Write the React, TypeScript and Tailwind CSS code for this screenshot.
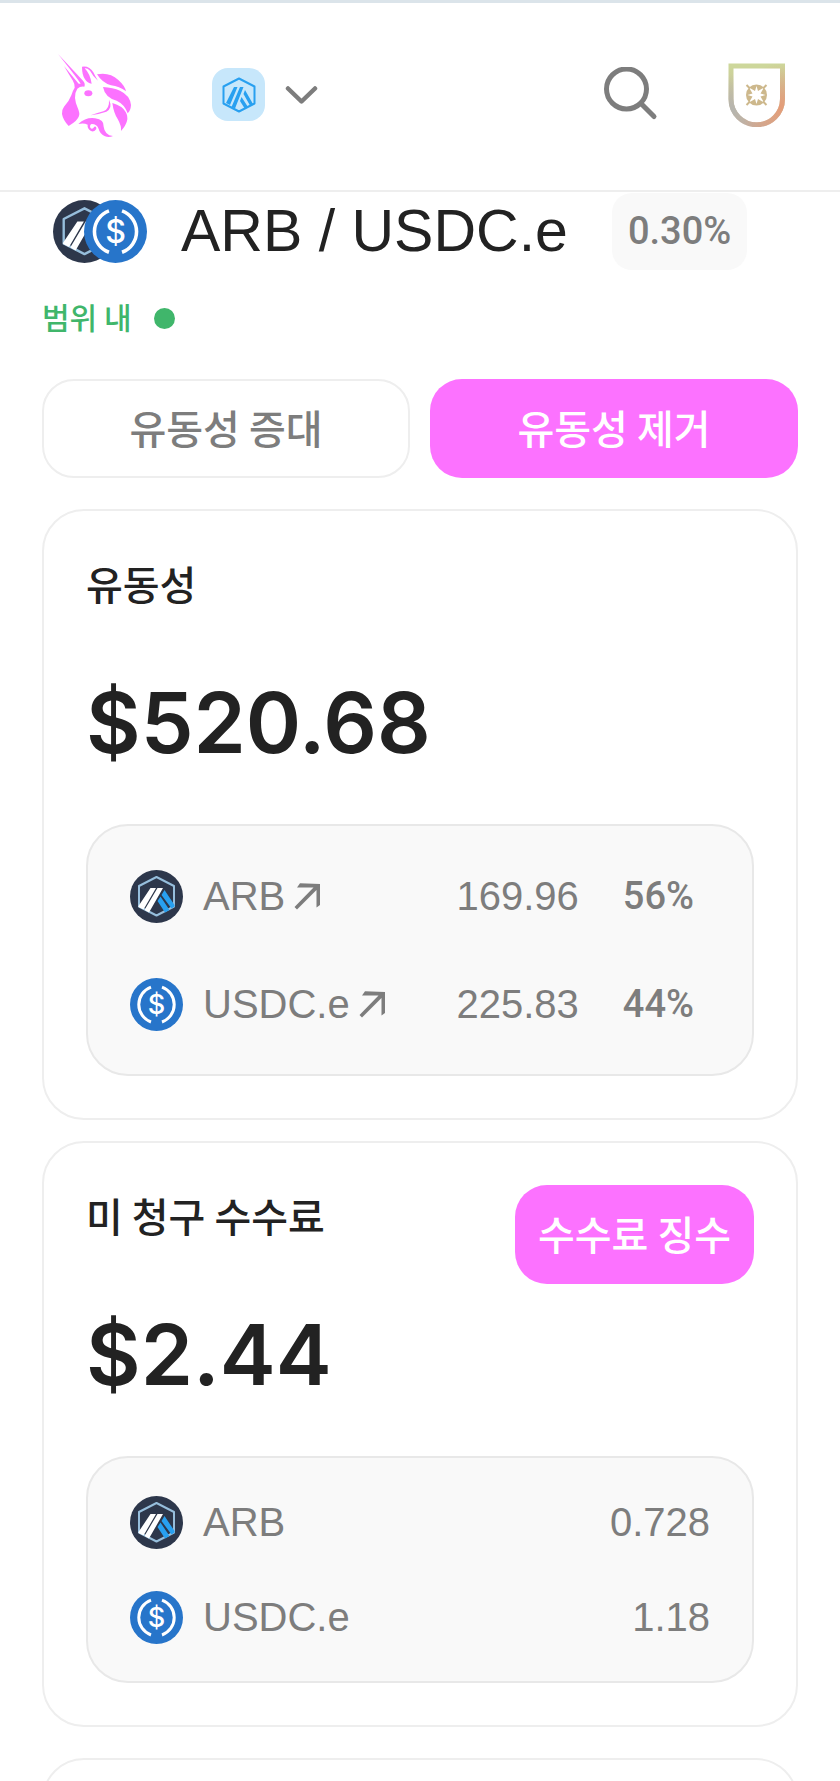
import React from 'react';

const HANGUL = "font-['Noto_Sans_CJK_KR',sans-serif]";

function UnicornLogo() {
  return (
    <svg viewBox="0 0 330 330" className="size-[110px]" fill="#fc72ff">
      <path d="M54 42 L129 122 Q137 131 133 140 Q121 138 112 146 Q104 158 105 174 Q106 187 113 203 Q120 219 117 228 Q113 242 86 258 Q69 240 66 222 Q65 209 72 200 Q88 183 94 166 Q98 152 104 143 Q105 133 98 121 Q86 102 72 78 L116 131 L122 131 Q110 112 54 42 Z" />
      <path d="M126 80 Q147 76 160 97 Q166 110 174 122 Q160 111 150 92 Q142 84 134 85 Q150 101 155 131 Q142 130 135 118 Q126 105 126 80 Z" />
      <ellipse cx="145" cy="160" rx="12" ry="9" />
      <path d="M171 103 Q208 95 235 120 Q255 138 258 154 Q238 139 213 136 Q187 129 171 103 Z" />
      <path d="M189 141 Q219 143 240 152 Q270 166 273 195 Q272 212 263 220 Q255 194 230 182 Q195 173 189 141 Z" />
      <path d="M217 189 Q248 198 257 216 Q272 241 243 273 Q245 258 233 237 Q221 219 217 189 Z" />
      <path d="M207 179 Q219 204 199 215 Q179 222 152 226 Q173 218 190 214 Q209 206 207 179 Z" />
      <path d="M115 252 Q138 231 165 235 Q193 239 191 260 Q194 285 219 288 Q207 294 195 289 Q180 283 176 267 Q171 252 155 252 Q148 255 151 263 Q157 270 163 260 Q170 258 169 267 Q163 277 153 273 Q141 266 143 254 Q132 248 115 252 Z" />
    </svg>
  );
}

function ChainIcon() {
  return (
    <span className="flex size-[53px] items-center justify-center rounded-2xl bg-[#c7e7fb]">
      <svg viewBox="0 0 34 36" className="h-9 w-[34px]">
        <path
          d="M17 1.5 L32.5 9.5 V26.5 L17 34.5 L1.5 26.5 V9.5 Z"
          fill="none"
          stroke="#28a0f0"
          strokeWidth="2"
          strokeLinejoin="round"
        />
        <path
          d="M12 10 H15.5 L8 28 L4 26 Z M18 10 H21.5 L13 31.5 L9.5 30 Z M21.5 17 L23 13 L31 27 L28 28.5 Z M18 24 L19.5 20 L26 30 L23 32 Z"
          fill="#28a0f0"
        />
      </svg>
    </span>
  );
}

function ArbIcon({ className }: { className: string }) {
  return (
    <svg viewBox="0 0 53 53" className={className}>
      <circle cx="26.5" cy="26.5" r="26.5" fill="#2d374b" />
      <path
        d="M26.5 7 L44 16 V36.5 L26.5 45.5 L9 36.5 V16 Z"
        fill="none"
        stroke="#96bedc"
        strokeWidth="2"
        strokeLinejoin="round"
      />
      <path
        d="M34.5 20 L44.5 35 V36.5 L41.5 38.5 L31.5 25 Z M30.5 26.5 L39.5 40 L35 42.5 L27.5 31 Z"
        fill="#28a0f0"
      />
      <path
        d="M20.5 18 H26 L13.5 39.5 L8.5 37 V36 Z M27.5 18 H33 L19 42.5 L14.5 40 Z"
        fill="#fff"
      />
    </svg>
  );
}

function UsdcIcon({ className }: { className: string }) {
  return (
    <svg viewBox="0 0 53 53" className={className}>
      <circle cx="26.5" cy="26.5" r="26.5" fill="#2775ca" />
      <path
        d="M21 9.2 A18.5 18.5 0 0 0 21 44 M32 9.2 A18.5 18.5 0 0 1 32 44"
        fill="none"
        stroke="#fff"
        strokeWidth="3"
      />
      <text
        x="26.5"
        y="36"
        textAnchor="middle"
        fontSize="27"
        fontWeight="500"
        fontFamily="Inter, sans-serif"
        fill="#fff"
      >
        $
      </text>
    </svg>
  );
}

function ArrowIcon() {
  return (
    <svg viewBox="0 0 28 28" className="size-7" fill="#7d7d7d">
      <path d="M1.5 25 L20.5 5.5 H4 L7 1.3 L27 2 V23 L23.5 25.5 V8 L4 27.5 Z" />
    </svg>
  );
}

function ShieldIcon() {
  return (
    <svg viewBox="0 0 58 64" className="h-16 w-[58px]">
      <defs>
        <linearGradient id="shield" x1="0" y1="0" x2="0" y2="1">
          <stop offset="0" stopColor="#cdd79b" />
          <stop offset="1" stopColor="#c8ac9a" />
        </linearGradient>
        <radialGradient id="shieldGlow" cx="0.95" cy="0.7" r="0.75">
          <stop offset="0" stopColor="#e59c78" />
          <stop offset="1" stopColor="#e59c78" stopOpacity="0" />
        </radialGradient>
        <radialGradient id="shieldShade" cx="0" cy="0.75" r="0.6">
          <stop offset="0" stopColor="#b5b5b0" />
          <stop offset="1" stopColor="#b5b5b0" stopOpacity="0" />
        </radialGradient>
      </defs>
      {['url(#shield)', 'url(#shieldShade)', 'url(#shieldGlow)'].map((paint) => (
        <path
          key={paint}
          d="M3 3 H54.5 V36 A25.5 25.5 0 0 1 3 36 Z"
          fill="none"
          stroke={paint}
          strokeWidth="5"
        />
      ))}
      <circle cx="28.5" cy="32" r="10.5" fill="#cdb88c" />
      <path
        d="M28.5 23 L30 28 L36 24.5 L32.5 30.5 L37.5 32 L32.5 33.5 L36 39.5 L30 36 L28.5 41 L27 36 L21 39.5 L24.5 33.5 L19.5 32 L24.5 30.5 L21 24.5 L27 28 Z"
        fill="#fff"
      />
      <path
        d="M18.5 22 L22 25.5 M38.5 22 L35 25.5 M18.5 42 L22 38.5 M38.5 42 L35 38.5"
        stroke="#cdb88c"
        strokeWidth="2"
      />
    </svg>
  );
}

function Header() {
  return (
    <header className="flex h-48 items-center justify-between border-t-3 border-b-2 border-t-[#dbe4ea] border-b-[#eee] pr-[54px] pb-1 pl-10">
      <div className="flex items-center gap-[62px]">
        <a href="#" aria-label="Uniswap">
          <UnicornLogo />
        </a>
        <button type="button" aria-label="Arbitrum" className="flex items-center gap-5">
          <ChainIcon />
          <svg viewBox="0 0 34 20" className="h-5 w-[34px]">
            <path
              d="M3 3.5 L16.5 16.5 L30 3.5"
              fill="none"
              stroke="#7d7d7d"
              strokeWidth="4.5"
              strokeLinecap="round"
              strokeLinejoin="round"
            />
          </svg>
        </button>
      </div>
      <div className="flex items-center gap-[69px]">
        <button type="button" aria-label="Search">
          <svg viewBox="0 0 56 56" className="size-14" fill="none" stroke="#7d7d7d" strokeLinecap="round">
            <circle cx="23.5" cy="22" r="20" strokeWidth="5" />
            <path d="M38.5 37 L51 49.5" strokeWidth="5" />
          </svg>
        </button>
        <button type="button" aria-label="Account">
          <ShieldIcon />
        </button>
      </div>
    </header>
  );
}

function Amount({ label, value }: { label: string; value: string }) {
  return (
    <div>
      <h2 className={`${HANGUL} text-[40px] leading-[60px] font-medium`}>{label}</h2>
      <p className="mt-[52px] font-['Inter',sans-serif] text-[84px] leading-[115px] font-semibold">
        {value}
      </p>
    </div>
  );
}

export default function App() {
  return (
    <div className="flex min-h-screen flex-col bg-white font-['Liberation_Sans',sans-serif] text-[#222]">
      <Header />
      <main className="flex flex-1 flex-col px-[42px] pt-px">
        <div className="flex h-[77px] items-center">
          <div className="ml-[11px] flex">
            <ArbIcon className="size-[63px]" />
            <UsdcIcon className="-ml-8 size-[63px]" />
          </div>
          <h1 className="ml-[34px] text-[59px] leading-[77px] whitespace-nowrap">ARB / USDC.e</h1>
          <span className="ml-11 rounded-[20px] bg-[#f9f9f9] px-4 font-['Roboto',sans-serif] text-[38px] leading-[77px] font-medium text-[#7d7d7d]">
            0.30%
          </span>
        </div>

        <div className="mt-[26px] flex h-11 items-center gap-[22px] text-[#40b66b]">
          <span className={`${HANGUL} pb-1 text-[30px] leading-[40px] font-medium`}>범위 내</span>
          <span className="size-[21px] rounded-full bg-[#40b66b]" />
        </div>

        <div className={`${HANGUL} mt-[39px] grid grid-cols-2 gap-5 text-[40px] font-medium`}>
          <button
            type="button"
            className="h-[99px] rounded-[32px] border-2 border-[#eee] pb-1 text-[#7d7d7d]"
          >
            유동성 증대
          </button>
          <button type="button" className="h-[99px] rounded-[32px] bg-[#fc72ff] pb-1 text-white">
            유동성 제거
          </button>
        </div>

        <section className="mt-[31px] rounded-[42px] border-2 border-[#eee] p-[42px]">
          <Amount label="유동성" value="$520.68" />
          <div className="mt-11 space-y-[52px] rounded-[42px] border-2 border-[#e8e8e8] bg-[#f9f9f9] p-[42px] text-[40px] leading-[56px] text-[#7d7d7d]">
            <div className="flex items-center">
              <ArbIcon className="size-[53px]" />
              <a href="#" className="ml-5 flex items-center gap-2">
                ARB <ArrowIcon />
              </a>
              <span className="ml-auto">169.96</span>
              <span className="ml-7 px-4 font-['Roboto',sans-serif] text-[38px] font-medium">56%</span>
            </div>
            <div className="flex items-center">
              <UsdcIcon className="size-[53px]" />
              <a href="#" className="ml-5 flex items-center gap-2">
                USDC.e <ArrowIcon />
              </a>
              <span className="ml-auto">225.83</span>
              <span className="ml-7 px-4 font-['Roboto',sans-serif] text-[38px] font-medium">44%</span>
            </div>
          </div>
        </section>

        <section className="mt-[21px] rounded-[42px] border-2 border-[#eee] p-[42px]">
          <div className="flex items-start justify-between">
            <Amount label="미 청구 수수료" value="$2.44" />
            <button
              type="button"
              className={`${HANGUL} h-[99px] rounded-[32px] bg-[#fc72ff] px-[23px] pb-1 text-[40px] font-medium text-white`}
            >
              수수료 징수
            </button>
          </div>
          <div className="mt-11 space-y-[39px] rounded-[42px] border-2 border-[#e8e8e8] bg-[#f9f9f9] px-[42px] py-9 text-[40px] leading-[56px] text-[#7d7d7d]">
            <div className="flex items-center">
              <ArbIcon className="size-[53px]" />
              <span className="ml-5">ARB</span>
              <span className="ml-auto">0.728</span>
            </div>
            <div className="flex items-center">
              <UsdcIcon className="size-[53px]" />
              <span className="ml-5">USDC.e</span>
              <span className="ml-auto">1.18</span>
            </div>
          </div>
        </section>

        <div className="mt-[31px] grow basis-[0px] overflow-hidden">
          <section className="h-24 rounded-t-[42px] border-2 border-[#eee]" />
        </div>
      </main>
    </div>
  );
}
